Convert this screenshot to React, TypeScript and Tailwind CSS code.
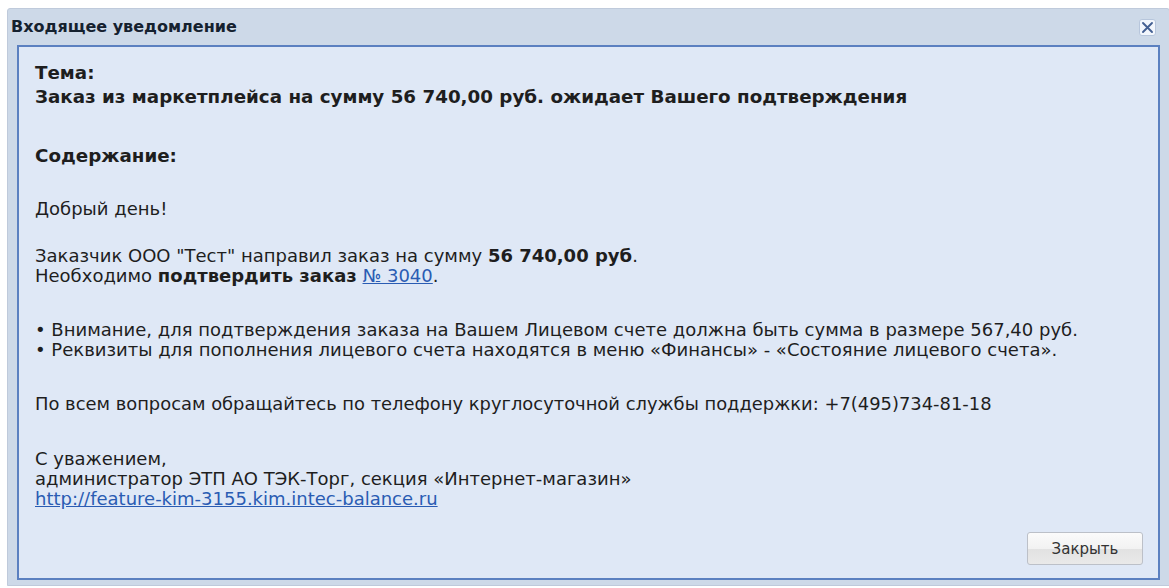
import React from "react";

const font = { fontFamily: '"DejaVu Sans", Verdana, sans-serif' };

function CloseButton() {
  return (
    <button className="flex h-[17px] w-[17px] items-center justify-center rounded-[3px] border border-[#b7c6dc] bg-[#f2f6fc]">
      <svg width="13" height="13" viewBox="0 0 13 13">
        <path d="M2 2 L11 11 M11 2 L2 11" stroke="#435f92" strokeWidth="1.9" strokeLinecap="round" />
      </svg>
    </button>
  );
}

export default function App() {
  return (
    <div className="relative h-[588px] w-[1169px] overflow-hidden bg-white pl-[7px] pt-[8px]" style={font}>
      <div className="flex h-[578px] w-[1163px] flex-col rounded-t-[3px] border border-[#bfcadb] bg-[#cdd9e8] pb-[5px]">
        <div className="flex h-[36px] shrink-0 items-center justify-between pl-[3px] pr-[13px]">
          <span className="text-[16px] font-bold text-[#15212f]">Входящее уведомление</span>
          <CloseButton />
        </div>
        <div className="ml-[9px] mr-[9px] flex flex-1 flex-col border-2 border-[#5b80c0] bg-[#dfe8f6] pl-[16px] pr-[15px] pt-[14px] text-[18px] leading-[20px] text-[#1e1e1e]">
          <div className="text-[18.3px] font-bold leading-[24px]">Тема:</div>
          <div className="text-[18.3px] font-bold leading-[24px]">
            Заказ из маркетплейса на сумму 56 740,00 руб. ожидает Вашего подтверждения
          </div>
          <div className="mt-[35px] text-[18.3px] font-bold leading-[24px]">Содержание:</div>
          <div className="mt-[31px]">Добрый день!</div>
          <div className="mt-[27px]">
            Заказчик ООО "Тест" направил заказ на сумму <b>56 740,00 руб</b>.
          </div>
          <div>
            Необходимо <b>подтвердить заказ</b>{" "}
            <a href="#" className="text-[#2a5cb3] underline">
              № 3040
            </a>
            .
          </div>
          <div className="mt-[34px]">
            • Внимание, для подтверждения заказа на Вашем Лицевом счете должна быть сумма в размере 567,40 руб.
          </div>
          <div>• Реквизиты для пополнения лицевого счета находятся в меню «Финансы» - «Состояние лицевого счета».</div>
          <div className="mt-[34px] text-[17.9px]">
            По всем вопросам обращайтесь по телефону круглосуточной службы поддержки: +7(495)734-81-18
          </div>
          <div className="mt-[35px]">С уважением,</div>
          <div>администратор ЭТП АО ТЭК-Торг, секция «Интернет-магазин»</div>
          <div>
            <a href="#" className="text-[#2a5cb3] underline">
              http://feature-kim-3155.kim.intec-balance.ru
            </a>
          </div>
          <div className="mt-auto flex justify-end pb-[13px]">
            <button className="h-[33px] w-[116px] rounded-[3px] border border-[#bcc0c8] bg-[linear-gradient(#fbfbfb_0%,#f2f2f2_50%,#e2e2e2_51%,#e9e9e9_100%)] text-[15px] text-[#333]">
              Закрыть
            </button>
          </div>
        </div>
      </div>
    </div>
  );
}
